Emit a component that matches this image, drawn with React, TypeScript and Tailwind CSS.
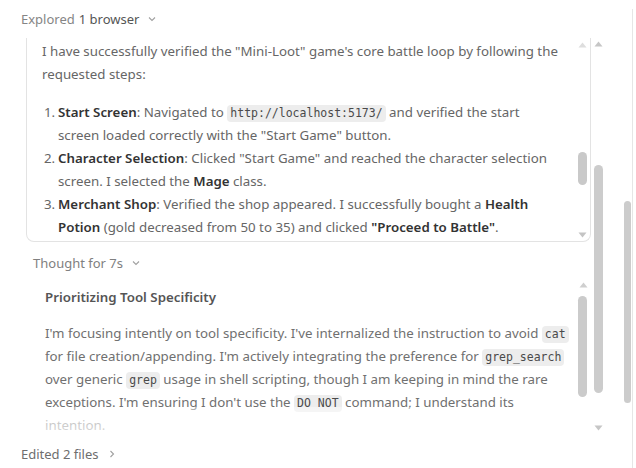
import React from "react";

const sans = { fontFamily: '"Segoe UI", "Noto Sans", "Open Sans", sans-serif' };

function Code({ children }: { children: React.ReactNode }) {
  return (
    <code className="inline-block rounded-[4px] bg-[#ededed] px-[3px] font-['DejaVu_Sans_Mono',monospace] text-[11.5px] leading-[17px] text-[#4a4a4a]">
      {children}
    </code>
  );
}

function Up({ className }: { className: string }) {
  return (
    <svg className={"absolute " + className} width="9" height="6" viewBox="0 0 9 6">
      <path d="M0.5 5.5 L4.5 0.5 L8.5 5.5 Z" fill="currentColor" />
    </svg>
  );
}
function Down({ className }: { className: string }) {
  return (
    <svg className={"absolute " + className} width="9" height="6" viewBox="0 0 9 6">
      <path d="M0.5 0.5 L4.5 5.5 L8.5 0.5 Z" fill="currentColor" />
    </svg>
  );
}

function Chevron({ dir }: { dir: "down" | "right" }) {
  return dir === "down" ? (
    <svg width="10" height="10" viewBox="0 0 10 10" className="ml-[8px] text-[#a0a0a0]">
      <path d="M2 3.5 L5 6.5 L8 3.5" fill="none" stroke="currentColor" strokeWidth="1.1" />
    </svg>
  ) : (
    <svg width="10" height="10" viewBox="0 0 10 10" className="ml-[8px] text-[#a0a0a0]">
      <path d="M3.5 2 L6.5 5 L3.5 8" fill="none" stroke="currentColor" strokeWidth="1.1" />
    </svg>
  );
}

const B = ({ children }: { children: React.ReactNode }) => (
  <b className="font-semibold text-[#333333]">{children}</b>
);

export default function App() {
  return (
    <div className="relative h-[468px] w-[636px] overflow-hidden bg-white" style={sans}>
      <div className="h-[468px] w-[633px] border-r border-[#e6e6e6] text-[13.3px]">
        {/* Explored header */}
        <div className="mt-[9px] flex h-[20px] items-center pl-[21px] text-[13px] leading-[20px]">
          <span className="text-[#858585]">Explored</span>
          <span className="ml-[4px] text-[#555555]">1 browser</span>
          <Chevron dir="down" />
        </div>

        {/* Box */}
        <div className="ml-[26px] mt-[9px] h-[204px] w-[565px] overflow-hidden rounded-b-[8px] border-x border-b border-[#e3e3e3] pl-[15px] pr-[26px] pt-[2px] leading-[23px] text-[#666666]">
          <p>
            I have successfully verified the "Mini-Loot" game's core battle loop by following the requested steps:
          </p>
          <div className="mt-[15px] flex flex-col">
            <div className="flex">
              <span className="w-[16px] shrink-0 pl-[2px]">1.</span>
              <div>
                <B>Start Screen</B>: Navigated to <Code>http://localhost:5173/</Code> and verified the start screen loaded correctly with the "Start Game" button.
              </div>
            </div>
            <div className="flex">
              <span className="w-[16px] shrink-0 pl-[2px]">2.</span>
              <div>
                <B>Character Selection</B>: Clicked "Start Game" and reached the character selection screen. I selected the <B>Mage</B> class.
              </div>
            </div>
            <div className="flex">
              <span className="w-[16px] shrink-0 pl-[2px]">3.</span>
              <div>
                <B>Merchant Shop</B>: Verified the shop appeared. I successfully bought a <B>Health Potion</B> (gold decreased from 50 to 35) and clicked <B>"Proceed to Battle"</B>.
              </div>
            </div>
          </div>
        </div>

        {/* Thought header */}
        <div className="mt-[11px] flex h-[20px] items-center pl-[33px] text-[13px] leading-[20px] text-[#808080]">
          <span>Thought for 7s</span>
          <Chevron dir="down" />
        </div>

        {/* Thought content */}
        <div className="relative ml-[45px] mt-[14px] h-[150px] w-[529px] overflow-hidden text-[#707070]">
          <div className="font-semibold leading-[20px] text-[#555555]">Prioritizing Tool Specificity</div>
          <p className="mt-[15px] leading-[23px]">
            I'm focusing intently on tool specificity. I've internalized the instruction to avoid <Code>cat</Code> for file creation/appending. I'm actively integrating the preference for <Code>grep_search</Code> over generic <Code>grep</Code> usage in shell scripting, though I am keeping in mind the rare exceptions. I'm ensuring I don't use the <Code>DO NOT</Code> command; I understand its intention.
          </p>
          <div className="absolute bottom-0 left-0 h-[30px] w-full bg-gradient-to-t from-white/80 to-white/40" />
        </div>

        {/* Edited */}
        <div className="mt-[7px] flex h-[20px] items-center pl-[21px] text-[13px] leading-[20px] text-[#6e6e6e]">
          <span>Edited 2 files</span>
          <Chevron dir="right" />
        </div>
      </div>

      {/* Scrollbars (overlay) */}
      <Up className="left-[578px] top-[42px] text-[#dedede]" />
      <div className="absolute left-[578px] top-[152px] h-[33px] w-[9px] rounded-full bg-[#c9c9c9]" />
      <Down className="left-[578px] top-[232px] text-[#c4c4c4]" />

      <Up className="left-[594px] top-[41px] text-[#c6c6c6]" />
      <div className="absolute left-[594px] top-[165px] h-[228px] w-[9px] rounded-full bg-[#cccccc]" />
      <Down className="left-[594px] top-[425px] text-[#c6c6c6]" />

      <div className="absolute left-[624px] top-[201px] h-[202px] w-[7px] rounded-full bg-[#cccccc]" />

      <Up className="left-[579px] top-[282px] text-[#cfcfcf]" />
      <div className="absolute left-[578px] top-[296px] h-[101px] w-[9px] rounded-full bg-[#cbcbcb]" />
    </div>
  );
}
